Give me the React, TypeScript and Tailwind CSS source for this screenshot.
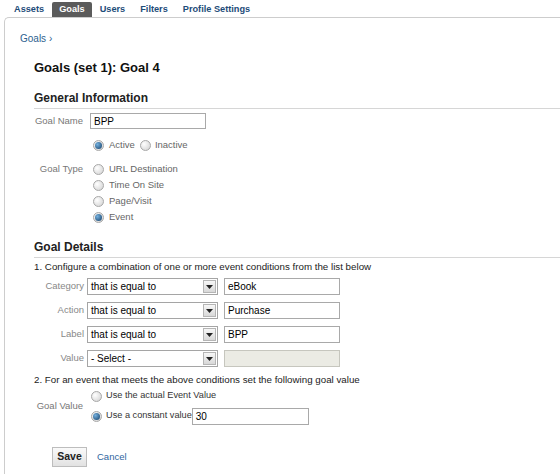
import React from 'react';

const Radio = ({ checked }: { checked?: boolean }) => (
  <span className="flex h-[11px] w-[11px] shrink-0 items-center justify-center rounded-full border border-[#a8a8a8] bg-[radial-gradient(circle_at_35%_35%,#ffffff,#cfcfcf)]">
    {checked && (
      <span className="h-[7px] w-[7px] rounded-full bg-[radial-gradient(circle_at_35%_35%,#74b0de,#123d66)]" />
    )}
  </span>
);

const Select = ({ value }: { value: string }) => (
  <div className="flex h-[17px] w-[131px] items-center border border-[#a5a5a5] bg-white pl-[3px] text-[10px] text-black">
    <span className="flex-1">{value}</span>
    <span className="mr-px flex h-[13px] w-[13px] items-center justify-center border border-[#b5b5b5] bg-gradient-to-b from-[#f7f7f7] to-[#d8d8d8]">
      <svg width="7" height="4" viewBox="0 0 7 4">
        <path d="M0 0h7L3.5 4z" fill="#222" />
      </svg>
    </span>
  </div>
);

const TextBox = ({ value, disabled, w = 'w-[116px]' }: { value?: string; disabled?: boolean; w?: string }) => (
  <div
    className={`flex h-[17px] ${w} items-center border px-[3px] text-[10px] text-black ${disabled ? 'border-[#c6c6be] bg-[#ebebe4]' : 'border-[#a9a9a9] bg-white'}`}
  >
    {value}
  </div>
);

const conditions = [
  { label: 'Category', op: 'that is equal to', value: 'eBook' },
  { label: 'Action', op: 'that is equal to', value: 'Purchase' },
  { label: 'Label', op: 'that is equal to', value: 'BPP' },
  { label: 'Value', op: '- Select -', value: '', disabled: true },
];

const goalTypes = [
  { name: 'URL Destination' },
  { name: 'Time On Site' },
  { name: 'Page/Visit' },
  { name: 'Event', checked: true },
];

export default function App() {
  return (
    <div className="h-[474px] w-[560px] overflow-hidden bg-white font-['Liberation_Sans',Arial,sans-serif]">
      {/* tabs */}
      <div className="ml-[7px] flex h-[17px] items-end gap-px text-[9.2px] font-bold text-[#1d4c79]">
        <span className="px-[7px] leading-[15px]">Assets</span>
        <span className="rounded-t-[2px] bg-[#5b5b5b] px-[7px] leading-[15px] text-white">Goals</span>
        <span className="px-[7px] leading-[15px]">Users</span>
        <span className="px-[7px] leading-[15px]">Filters</span>
        <span className="px-[7px] leading-[15px]">Profile Settings</span>
      </div>

      <div className="ml-[4px] h-[457px] rounded-tl-[5px] border-l border-t border-[#cdcdcd]">
        <div className="mt-[14px] pl-[15px] text-[10px] leading-[13px] text-[#2d5f8f]">Goals ›</div>

        <div className="pl-[29px]">
          <h1 className="mt-[14px] text-[13px] font-bold leading-[18px] text-[#111]">Goals (set 1): Goal 4</h1>

          <h2 className="mt-[13px] border-b border-[#d6d6d6] pb-[2px] text-[12px] font-bold leading-[16px] text-[#222]">
            General Information
          </h2>

          <div className="mt-[4px] flex h-[16px] items-center">
            <span className="w-[49px] text-right text-[9.5px] text-[#777]">Goal Name</span>
            <div className="ml-[7px] flex h-[16px] w-[116px] items-center border border-[#a9a9a9] px-[3px] text-[10px] text-black">
              BPP
            </div>
          </div>

          <div className="ml-[59px] mt-[9px] flex h-[14px] items-center text-[9.5px] text-[#666]">
            <Radio checked />
            <span className="ml-[5px] mr-[5px]">Active</span>
            <Radio />
            <span className="ml-[4px]">Inactive</span>
          </div>

          <div className="mt-[9px] flex">
            <span className="w-[49px] text-right text-[9.5px] leading-[16px] text-[#777]">Goal Type</span>
            <div className="ml-[10px] flex flex-col">
              {goalTypes.map((t) => (
                <div key={t.name} className="flex h-[16px] items-center text-[9.5px] text-[#666]">
                  <Radio checked={t.checked} />
                  <span className="ml-[5px]">{t.name}</span>
                </div>
              ))}
            </div>
          </div>

          <h2 className="mt-[14px] border-b border-[#d6d6d6] pb-[2px] text-[12px] font-bold leading-[16px] text-[#222]">
            Goal Details
          </h2>

          <p className="mt-[3px] text-[9.75px] leading-[12px] text-[#222]">
            1. Configure a combination of one or more event conditions from the list below
          </p>

          <div className="mt-[5px] flex flex-col gap-[7px]">
            {conditions.map((c) => (
              <div key={c.label} className="flex h-[17px] items-center">
                <span className="w-[50px] text-right text-[9.5px] text-[#888]">{c.label}</span>
                <div className="ml-[3px]">
                  <Select value={c.op} />
                </div>
                <div className="ml-[6px]">
                  <TextBox value={c.value} disabled={c.disabled} />
                </div>
              </div>
            ))}
          </div>

          <p className="mt-[7px] text-[9.75px] leading-[12px] text-[#222]">
            2. For an event that meets the above conditions set the following goal value
          </p>

          <div className="mt-[2px] flex items-center">
            <span className="w-[49px] text-right text-[9.5px] text-[#777]">Goal Value</span>
            <div className="ml-[8px] flex flex-col gap-[3px]">
              <div className="flex h-[16px] items-center text-[9.2px] text-[#333]">
                <Radio />
                <span className="ml-[4px]">Use the actual Event Value</span>
              </div>
              <div className="flex h-[18px] items-center text-[9.2px] text-[#333]">
                <Radio checked />
                <span className="ml-[4px]">Use a constant value</span>
                <TextBox value="30" w="w-[117px]" />
              </div>
            </div>
          </div>

          <div className="ml-[18px] mt-[22px] flex items-center">
            <button className="h-[20px] w-[35px] border border-[#bdbdbd] bg-gradient-to-b from-[#fafafa] to-[#e2e2e2] text-[10.5px] font-bold text-[#222]">
              Save
            </button>
            <span className="ml-[10px] text-[9.5px] text-[#2f65a0]">Cancel</span>
          </div>
        </div>
      </div>
    </div>
  );
}
